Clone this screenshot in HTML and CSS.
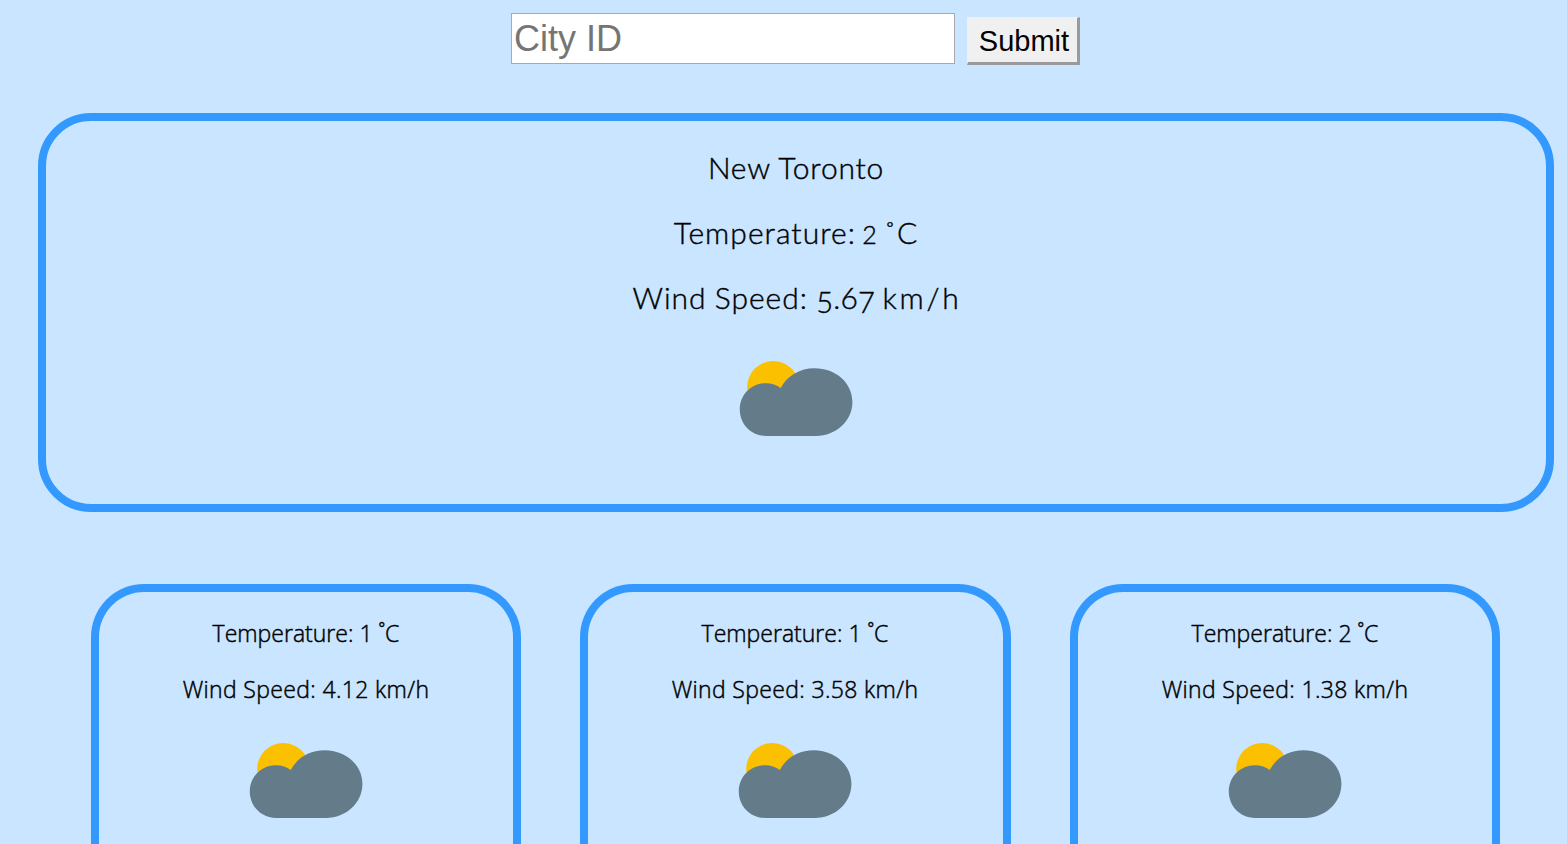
FILE: index.html
```html
<!DOCTYPE html>
<html lang="en">
<head>
<meta charset="utf-8">
<title>Weather</title>
<link rel="stylesheet" href="styles.css">
</head>
<body>
<svg width="0" height="0" class="defs">
  <symbol id="partly-cloudy" viewBox="736 358 120 80">
    <circle cx="773.2" cy="387" r="26" fill="#fbc100"/>
    <path fill="#647b8a" d="M766 435.9C751 435.9 739.8 424 739.8 409.5C739.8 395 751 383.3 766 383.3C771.5 383.3 777 385 780.7 388C787.5 375.5 800 368.3 814.5 368.3C836 368.3 852.4 383 852.4 402C852.4 421 836 435.9 816 435.9Z"/>
  </symbol>
</svg>
<form class="search">
  <input class="city" type="text" placeholder="City ID">
  <button class="submit" type="button">Submit</button>
</form>
<main class="current">
  <p class="line name">New Toronto</p>
  <p class="line temp">Temperature: <span class="digit">2</span> ˚C</p>
  <p class="line wind">Wind Speed: <span class="value"><span class="low">5</span>.6<span class="low">7</span> </span><span class="unit">km/h</span></p>
  <svg class="icon"><use href="#partly-cloudy"/></svg>
</main>
<section class="forecast">
  <article class="day">
    <p class="row">Temperature: 1 ˚C</p>
    <p class="row speed">Wind Speed: 4.12 km/h</p>
    <svg class="icon"><use href="#partly-cloudy"/></svg>
  </article>
  <article class="day">
    <p class="row">Temperature: 1 ˚C</p>
    <p class="row speed">Wind Speed: 3.58 km/h</p>
    <svg class="icon"><use href="#partly-cloudy"/></svg>
  </article>
  <article class="day">
    <p class="row">Temperature: 2 ˚C</p>
    <p class="row speed">Wind Speed: 1.38 km/h</p>
    <svg class="icon"><use href="#partly-cloudy"/></svg>
  </article>
</section>
</body>
</html>
```
FILE: styles.css
```css
* { box-sizing: border-box; }
body {
  margin: 0;
  background: #c9e5ff;
  color: #000;
  font-family: "Open Sans", "Noto Sans", sans-serif;
}
.defs { display: block; }
.search {
  display: flex;
  align-items: flex-start;
  gap: 12px;
  height: 113px;
  padding: 13px 0 0 511px;
}
.city {
  width: 444px;
  height: 51px;
  padding: 1px 2px;
  border: 1px solid #a9a9a9;
  background: #fff;
  font: 36px "Liberation Sans", Arial, sans-serif;
}
.city::placeholder { color: #757575; opacity: 1; }
.submit {
  width: 113px;
  height: 48px;
  margin-top: 4px;
  padding: 2px 0 0 3px;
  border: solid #9a9a9a;
  border-width: 0 3px 3px 0;
  border-top: 1px solid #f0f0f0;
  border-left: 1px solid #f0f0f0;
  background: #f0f0f0;
  color: #000;
  font: 29px "Liberation Sans", Arial, sans-serif;
}
.current {
  display: flex;
  flex-direction: column;
  align-items: center;
  width: 1516px;
  height: 399px;
  margin-left: 38px;
  padding-top: 26px;
  border: 8px solid #3399ff;
  border-radius: 53px;
}
.line {
  height: 40px;
  margin: 0 0 25px;
  font: 300 30px/40px Lato, sans-serif;
  white-space: pre;
  -webkit-text-stroke: 0.4px #000;
}
.name { letter-spacing: 0.8px; }
.temp { letter-spacing: 1.05px; word-spacing: -3px; }
.wind { letter-spacing: 1px; word-spacing: -1px; }
.value { letter-spacing: 0.2px; }
.unit { letter-spacing: 2.8px; margin-right: -2px; }
.digit { font-size: 25px; line-height: 0; }
.low { font-size: 29px; line-height: 0; vertical-align: -4px; }
.icon { display: block; width: 120px; height: 80px; }
.current .icon { margin-top: 16px; }
.forecast {
  display: grid;
  grid-template-columns: 430px 431px 430px;
  column-gap: 59px;
  padding: 72px 0 0 91px;
}
.day {
  display: flex;
  flex-direction: column;
  align-items: center;
  height: 260px;
  padding-top: 25px;
  border: 8px solid #3399ff;
  border-bottom: 0;
  border-radius: 53px 53px 0 0;
}
.day:nth-child(2) { padding-right: 1px; }
.row {
  height: 32px;
  margin: 0 0 24px;
  font-size: 23px;
  font-weight: 300;
  line-height: 32px;
  white-space: pre;
  -webkit-text-stroke: 0.45px #000;
}
.speed { letter-spacing: 0.35px; }
.day .icon { margin-top: 11px; }
```
